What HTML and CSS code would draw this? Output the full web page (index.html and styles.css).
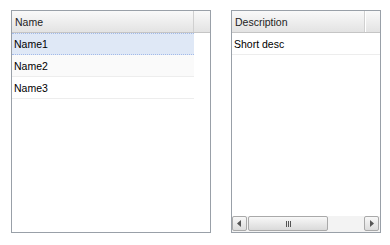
FILE: index.html
```html
<!DOCTYPE html>
<html>
<head>
<meta charset="utf-8">
<link rel="stylesheet" href="styles.css">
</head>
<body>
<div class="page">
  <div class="grid grid-left">
    <div class="head">
      <div class="hcol hcol-name">Name</div>
      <div class="hfill"></div>
    </div>
    <div class="body">
      <div class="row row-sel"><span>Name1</span></div>
      <div class="row row-alt"><span>Name2</span></div>
      <div class="row"><span>Name3</span></div>
    </div>
  </div>
  <div class="grid grid-right">
    <div class="head">
      <div class="hcol hcol-desc">Description</div>
      <div class="hfill"></div>
    </div>
    <div class="body">
      <div class="row row-desc"><span>Short desc</span></div>
    </div>
    <div class="hscroll">
      <div class="sbtn sbtn-left"><svg width="5" height="7" viewBox="0 0 5 7"><path d="M4 0 L4 7 L0 3.5 Z" fill="#555"/></svg></div>
      <div class="thumb"><span class="grip"></span><span class="grip"></span><span class="grip"></span></div>
      <div class="track"></div>
      <div class="sbtn sbtn-right"><svg width="5" height="7" viewBox="0 0 5 7"><path d="M1 0 L1 7 L5 3.5 Z" fill="#555"/></svg></div>
    </div>
  </div>
</div>
</body>
</html>
```

FILE: styles.css
```css
* { box-sizing: border-box; }
html, body { margin: 0; padding: 0; background: #fff; }
body { font-family: "Liberation Sans", Arial, sans-serif; font-size: 10.5px; color: #000; }
.page { display: flex; gap: 20px; padding: 10px 0 0 11px; }
.grid {
  border: 1px solid #99a0a8;
  height: 223px;
  display: flex;
  flex-direction: column;
  background: #fff;
}
.grid-left { width: 200px; }
.grid-right { width: 150px; }
.head {
  display: flex;
  height: 22px;
  border-bottom: 1px solid #c5c5c5;
  background: linear-gradient(#f9f9f9, #e3e3e3);
}
.hcol {
  display: flex;
  align-items: center;
  padding-left: 3px;
  border-right: 1px solid #d0d0d0;
  color: #222;
}
.hcol-name { width: 182px; }
.hcol-desc { width: 133px; box-shadow: 1px 0 0 #fff; }
.hfill { flex: 1; }
.body { flex: 1; display: flex; flex-direction: column; }
.grid-left .row { width: 182px; }
.grid-right .row { width: 133px; }
.row {
  height: 22px;
  display: flex;
  align-items: center;
  padding-left: 2px;
  border-bottom: 1px solid #ededed;
}
.row-sel {
  background: #dfe8f6;
  border-top: 1px dotted #a3bae9;
  border-bottom: 1px dotted #a3bae9;
  height: 22px;
}
.row-alt { background: #fafafa; }
.row-desc { width: 148px !important; }
.hscroll {
  height: 16px;
  display: flex;
  align-items: stretch;
  background: #f3f3f3;
  padding: 0 1px 1px 0;
}
.sbtn {
  width: 15px;
  border: 1px solid #a9a9a9;
  border-radius: 2px;
  background: linear-gradient(#f8f8f8, #dcdcdc);
  display: flex;
  align-items: center;
  justify-content: center;
}
.sbtn-left { margin-left: 0; }
.thumb {
  width: 80px;
  margin-left: 1px;
  border: 1px solid #a9a9a9;
  border-radius: 2px;
  background: linear-gradient(#f8f8f8, #dadada);
  display: flex;
  align-items: center;
  justify-content: center;
  gap: 1px;
}
.grip { width: 1px; height: 6px; background: #555; }
.track { flex: 1; }
```
